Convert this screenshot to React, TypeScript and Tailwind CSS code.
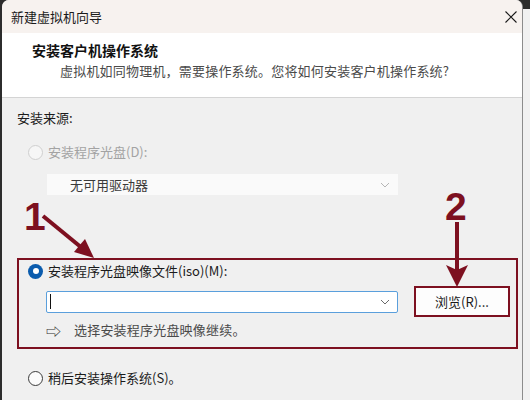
import React from "react";

const font = { fontFamily: '"Segoe UI", "Noto Sans CJK SC", "Noto Sans", sans-serif' };

function Radio({ state }: { state: "disabled" | "checked" | "unchecked" }) {
  if (state === "checked") {
    return (
      <span className="flex h-[15px] w-[15px] items-center justify-center rounded-full bg-[#0b5cad]">
        <span className="h-[6px] w-[6px] rounded-full bg-white" />
      </span>
    );
  }
  if (state === "disabled") {
    return <span className="h-[15px] w-[15px] rounded-full border border-[#cfcfcf] bg-[#f6f6f6]" />;
  }
  return <span className="h-[15px] w-[15px] rounded-full border border-[#3a3a3a] bg-[#fbfbfb]" />;
}

function Chevron({ color }: { color: string }) {
  return (
    <svg width="10" height="6" viewBox="0 0 10 6" fill="none">
      <path d="M1 1l4 4 4-4" stroke={color} strokeWidth="1" />
    </svg>
  );
}

export default function App() {
  return (
    <div className="relative flex h-[400px] w-[530px] overflow-hidden bg-[#2c2c2c] text-[13px] text-[#1b1b1b]" style={font}>
      {/* window */}
      <div className="ml-[2px] flex h-[400px] w-[521px] flex-col overflow-hidden rounded-tl-[7px] rounded-tr-[7px] border-r border-[#8c8c8c] bg-[#f0f0f0]">
        {/* title bar */}
        <div className="flex h-[33px] shrink-0 items-center justify-between bg-[#f7f2ef] pl-[9px] pr-[5px]">
          <span className="text-[13px] leading-none text-[#1a1a1a]">新建虚拟机向导</span>
          <svg width="12" height="12" viewBox="0 0 12 12" className="mt-[1px]">
            <path d="M0.5 0.5l11 11M11.5 0.5l-11 11" stroke="#1a1a1a" strokeWidth="1.1" />
          </svg>
        </div>
        {/* header */}
        <div className="h-[65px] shrink-0 border-b border-[#d4d4d4] bg-white pl-[30px] pt-[7px]">
          <div className="text-[14px] font-bold leading-[20px] text-[#111]">安装客户机操作系统</div>
          <div className="mt-[1px] pl-[28px] text-[13px] leading-[20px] tracking-[0.2px] text-[#4a4a4a]">
            虚拟机如同物理机，需要操作系统。您将如何安装客户机操作系统?
          </div>
        </div>
        {/* body */}
        <div className="flex flex-col pl-[15px]">
          <div className="mt-[10px] leading-[20px]">安装来源:</div>
          <div className="mt-[14px] flex h-[20px] items-center gap-[5px] pl-[11px] text-[#a3a3a3]">
            <Radio state="disabled" />
            <span className="leading-[20px]">安装程序光盘(D):</span>
          </div>
          <div className="ml-[30px] mt-[12px] flex h-[21px] w-[351px] items-center justify-between bg-[#fafafa] pl-[23px] pr-[8px] text-[#3a3a3a]">
            <span className="leading-none">无可用驱动器</span>
            <Chevron color="#b5b5b5" />
          </div>

          {/* highlighted box */}
          <div className="mt-[63px] flex h-[91px] w-[501px] flex-col border-2 border-[#7d1020] pl-[9px]">
            <div className="mt-[1px] flex h-[20px] items-center gap-[5px]">
              <Radio state="checked" />
              <span className="leading-[20px]">安装程序光盘映像文件(iso)(M):</span>
            </div>
            <div className="mt-[5px] flex h-[31px] items-center">
              <div className="ml-[18px] flex h-[22px] w-[352px] items-center justify-between rounded-[2px] border border-[#5a9fdc] bg-white pl-[3px] pr-[7px]">
                <span className="h-[15px] w-px bg-[#111]" />
                <Chevron color="#6a6a6a" />
              </div>
              <div className="ml-[16px] flex h-[31px] w-[96px] items-center justify-center border-2 border-[#7d1020] bg-[#fdfdfd]">
                <span className="leading-none">浏览(R)...</span>
              </div>
            </div>
            <div className="mt-[3px] flex h-[20px] items-center pl-[18px] text-[#4a4a4a]">
              <span className="w-[28px] text-[15px] leading-none text-[#333]">⇨</span>
              <span className="leading-[20px] tracking-[0.2px]">选择安装程序光盘映像继续。</span>
            </div>
          </div>

          <div className="mt-[19px] flex h-[20px] items-center gap-[5px] pl-[11px]">
            <Radio state="unchecked" />
            <span className="leading-[20px]">稍后安装操作系统(S)。</span>
          </div>
        </div>
      </div>
      {/* right strip */}
      <div className="mt-[9px] w-[7px] bg-[#f1f1f1]" />

      {/* annotations */}
      <div
        className="pointer-events-none absolute left-[24px] top-[197px] text-[39px] font-bold leading-none text-[#7d1020]"
        style={{ fontFamily: '"Liberation Sans", Arial, sans-serif' }}
      >
        1
      </div>
      <div
        className="pointer-events-none absolute left-[445px] top-[187px] text-[39px] font-bold leading-none text-[#7d1020]"
        style={{ fontFamily: '"Liberation Sans", Arial, sans-serif' }}
      >
        2
      </div>
      <svg className="pointer-events-none absolute left-0 top-0" width="530" height="400" viewBox="0 0 530 400">
        <line x1="43" y1="216" x2="82" y2="248" stroke="#7d1020" strokeWidth="4" />
        <polygon points="94,258 74,252 79,246 85,239" fill="#7d1020" />
        <line x1="457" y1="222" x2="457" y2="272" stroke="#7d1020" strokeWidth="4" />
        <polygon points="446,265 457,270 468,265 457,287" fill="#7d1020" />
      </svg>
    </div>
  );
}
